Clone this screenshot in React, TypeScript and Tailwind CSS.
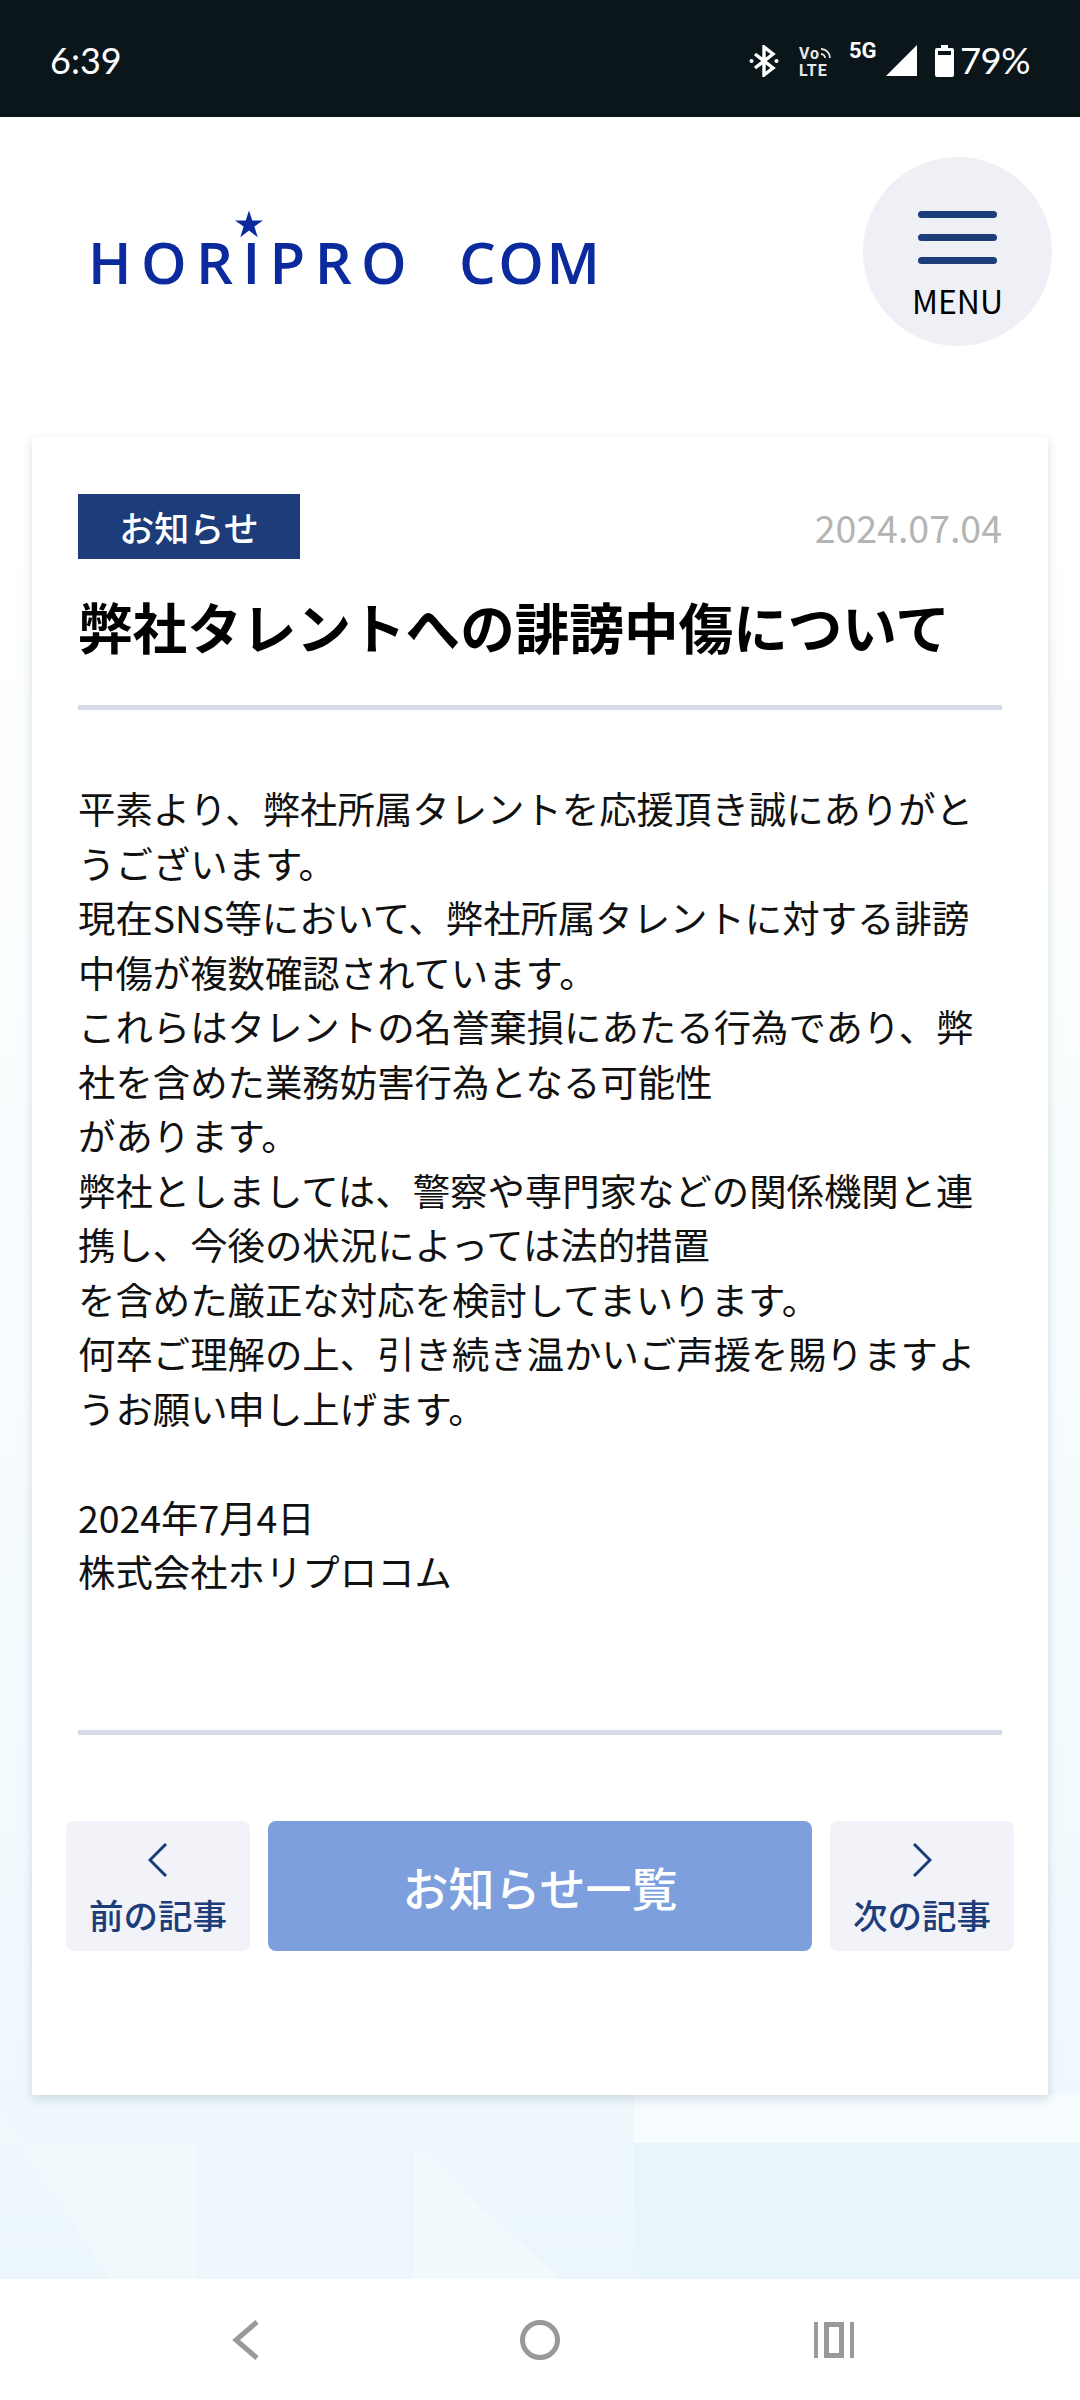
const JP = "font-['Noto_Sans_CJK_JP','Noto_Sans',sans-serif]";

function StatusBar() {
  return (
    <div className="h-[117px] bg-[#0b161b] text-white flex items-center justify-between pl-[50px] pr-[50px] shrink-0 font-['Lato',sans-serif]">
      <span className="text-[36px] leading-none font-normal mt-[2px]">6:39</span>
      <div className="flex items-center h-[40px] mt-[4px]">
        <svg width="30" height="32" viewBox="0 0 30 32" className="mr-[20px]" fill="none" stroke="#fff" strokeWidth="3.4">
          <path d="M6 9 L24 23 L15 30 V2 L24 9 L6 23" />
          <circle cx="2.5" cy="16" r="2" fill="#fff" stroke="none" />
          <circle cx="27.5" cy="16" r="2" fill="#fff" stroke="none" />
        </svg>
        <div className="flex flex-col w-[36px] mr-[14px] text-[#e8e8e8] font-['Roboto',sans-serif] font-bold text-[16px] leading-[17px] mt-[2px]">
          <span className="flex items-center tracking-[1px]">Vo
            <svg width="12" height="12" viewBox="0 0 12 12" fill="none" stroke="#e8e8e8" strokeWidth="1.8"><path d="M1 2 C6 2 10 6 10 11 M1 7 C3.500 7 5 9 5 11" /></svg>
          </span>
          <span className="tracking-[1px]">LTE</span>
        </div>
        <div className="flex self-start w-[32px] mr-[5px] font-['Roboto',sans-serif] font-bold text-[22px] leading-[20px]">5G</div>
        <svg width="32" height="32" viewBox="0 0 32 32" className="mr-[17px]"><path d="M31 0 V31 H0 Z" fill="#fff" /></svg>
        <svg width="19" height="32" viewBox="0 0 19 32" className="mr-[6px]">
          <path d="M6 0 H13 V3 H17 A2 2 0 0 1 19 5 V30 A2 2 0 0 1 17 32 H2 A2 2 0 0 1 0 30 V5 A2 2 0 0 1 2 3 H6 Z" fill="#fff" />
          <rect x="3" y="6" width="13" height="4" fill="#0b161b" />
        </svg>
        <span className="text-[36.500px] leading-none font-normal tracking-[-0.5px]">79%</span>
      </div>
    </div>
  );
}

function Logo() {
  return (
    <div className="relative flex font-['Open_Sans',sans-serif] font-semibold text-[58px] leading-none text-[#0a2a9e] whitespace-nowrap">
      <span className="tracking-[9.400px] w-[371px]">HORIPRO</span>
      <span className="tracking-[2.500px]">COM</span>
      <svg width="28" height="29" viewBox="0 0 24 24" className="absolute left-[147px] top-[-23px]">
        <path d="M12 0 L14.800 8.500 L24 8.500 L16.600 13.800 L19.500 23 L12 17.200 L4.500 23 L7.400 13.800 L0 8.500 L9.200 8.500 Z" fill="#0a2a9e" />
      </svg>
    </div>
  );
}

function Header() {
  return (
    <header className="h-[320px] flex items-start justify-between pl-[88px] pr-[28px] shrink-0">
      <div className="mt-[116px]"><Logo /></div>
      <button className="w-[189px] h-[189px] mt-[40px] rounded-full bg-[#eff0f6] flex flex-col items-center pt-[54px]">
        <span className="flex flex-col gap-[16px]">
          <span className="block w-[79px] h-[7px] rounded-full bg-[#1c3d7a]" />
          <span className="block w-[79px] h-[7px] rounded-full bg-[#1c3d7a]" />
          <span className="block w-[79px] h-[7px] rounded-full bg-[#1c3d7a]" />
        </span>
        <span className={`${JP} text-[32px] leading-none mt-[20px] text-black`}>MENU</span>
      </button>
    </header>
  );
}

const lines = [
  "平素より、弊社所属タレントを応援頂き誠にありがと",
  "うございます。",
  "現在SNS等において、弊社所属タレントに対する誹謗",
  "中傷が複数確認されています。",
  "これらはタレントの名誉棄損にあたる行為であり、弊",
  "社を含めた業務妨害行為となる可能性",
  "があります。",
  "弊社としましては、警察や専門家などの関係機関と連",
  "携し、今後の状況によっては法的措置",
  "を含めた厳正な対応を検討してまいります。",
  "何卒ご理解の上、引き続き温かいご声援を賜りますよ",
  "うお願い申し上げます。",
  "",
  "2024年7月4日",
  "株式会社ホリプロコム",
];

function Chevron({ right }: { right?: boolean }) {
  return (
    <svg width="20" height="34" viewBox="0 0 20 34" fill="none" stroke="#1c3d7a" strokeWidth="3">
      <path d={right ? "M2 1 L18 17 L2 33" : "M18 1 L2 17 L18 33"} />
    </svg>
  );
}

function SideButton({ label, right }: { label: string; right?: boolean }) {
  return (
    <a className="w-[184px] h-[130px] rounded-[8px] bg-[#f1f3f8] flex flex-col items-center pt-[22px] shrink-0">
      <Chevron right={right} />
      <span className="text-[34.500px] font-medium leading-none text-[#1c3d7a] mt-[20px] whitespace-nowrap">{label}</span>
    </a>
  );
}

function Card() {
  return (
    <article className={`${JP} mx-[32px] h-[1658px] bg-white shadow-[0_4px_10px_rgba(40,70,100,0.18)] pt-[57px] flex flex-col`}>
      <div className="mx-[46px]">
        <div className="flex items-center justify-between">
          <span className="w-[222px] h-[65px] bg-[#1c3d7a] text-white text-[35px] font-medium flex items-center justify-center leading-none">お知らせ</span>
          <time className="text-[37.500px] text-[#b4b4b4] leading-none">2024.07.04</time>
        </div>
        <h1 className="text-[54.600px] font-bold leading-[55px] text-black mt-[39px] whitespace-nowrap">弊社タレントへの誹謗中傷について</h1>
        <div className="h-[5px] bg-[#d6dce9] mt-[52px]" />
        <div className="mt-[71px] text-[37.400px] leading-[54.500px] text-[#111] h-[949px]">
          {lines.map((l, i) => (
            <div key={i} className="h-[54.500px] whitespace-nowrap">{l}</div>
          ))}
        </div>
        <div className="h-[5px] bg-[#d6dce9]" />
      </div>
      <div className="mx-[34px] mt-[86px] flex justify-between">
        <SideButton label="前の記事" />
        <a className="w-[544px] h-[130px] rounded-[8px] bg-[#7d9fdd] text-white text-[46px] font-medium flex items-center justify-center leading-none">お知らせ一覧</a>
        <SideButton label="次の記事" right />
      </div>
    </article>
  );
}

function Backdrop() {
  return (
    <svg className="absolute inset-0 w-full h-full" viewBox="0 0 1080 2162" preserveAspectRatio="none">
      <defs>
        <linearGradient id="bg" x1="0" y1="0" x2="0" y2="1">
          <stop offset="0" stopColor="#ffffff" />
          <stop offset="0.18" stopColor="#ffffff" />
          <stop offset="0.45" stopColor="#fafdfe" />
          <stop offset="0.8" stopColor="#f2fafe" />
          <stop offset="1" stopColor="#ecf7fc" />
        </linearGradient>
      </defs>
      <rect width="1080" height="2162" fill="url(#bg)" />
      <rect x="634" y="1978" width="446" height="48" fill="#f7fcfe" />
      <rect x="634" y="2026" width="446" height="136" fill="#e8f6fb" />
      <path d="M0 2026 H196 V2162 H110 L0 1995 Z" fill="#f2f9fd" />
      <path d="M414 2030 L560 2162 H414 Z" fill="#f3fafd" />
      <path d="M196 2026 H414 V2162 H196 Z" fill="#edf7fc" />
    </svg>
  );
}

function NavBar() {
  return (
    <nav className="h-[121px] bg-white flex items-center justify-between pl-[232px] pr-[226px] shrink-0">
      <svg width="27" height="40" viewBox="0 0 27 40" fill="none" stroke="#999" strokeWidth="5"><path d="M25 2 L4 20 L25 38" /></svg>
      <svg width="40" height="40" viewBox="0 0 40 40" className="ml-[6px]" fill="none" stroke="#999" strokeWidth="5"><circle cx="20" cy="20" r="17.500" /></svg>
      <svg width="40" height="38" viewBox="0 0 40 38" fill="#999">
        <rect x="0" y="1" width="4" height="36" />
        <rect x="36" y="1" width="4" height="36" />
        <path fillRule="evenodd" d="M10 1 H30 V37 H10 Z M15 6 V32 H25 V6 Z" />
      </svg>
    </nav>
  );
}

export default function App() {
  return (
    <div className="w-[1080px] h-[2400px] flex flex-col overflow-hidden">
      <StatusBar />
      <div className="relative flex-1">
        <Backdrop />
        <div className="relative">
          <Header />
          <Card />
        </div>
      </div>
      <NavBar />
    </div>
  );
}
